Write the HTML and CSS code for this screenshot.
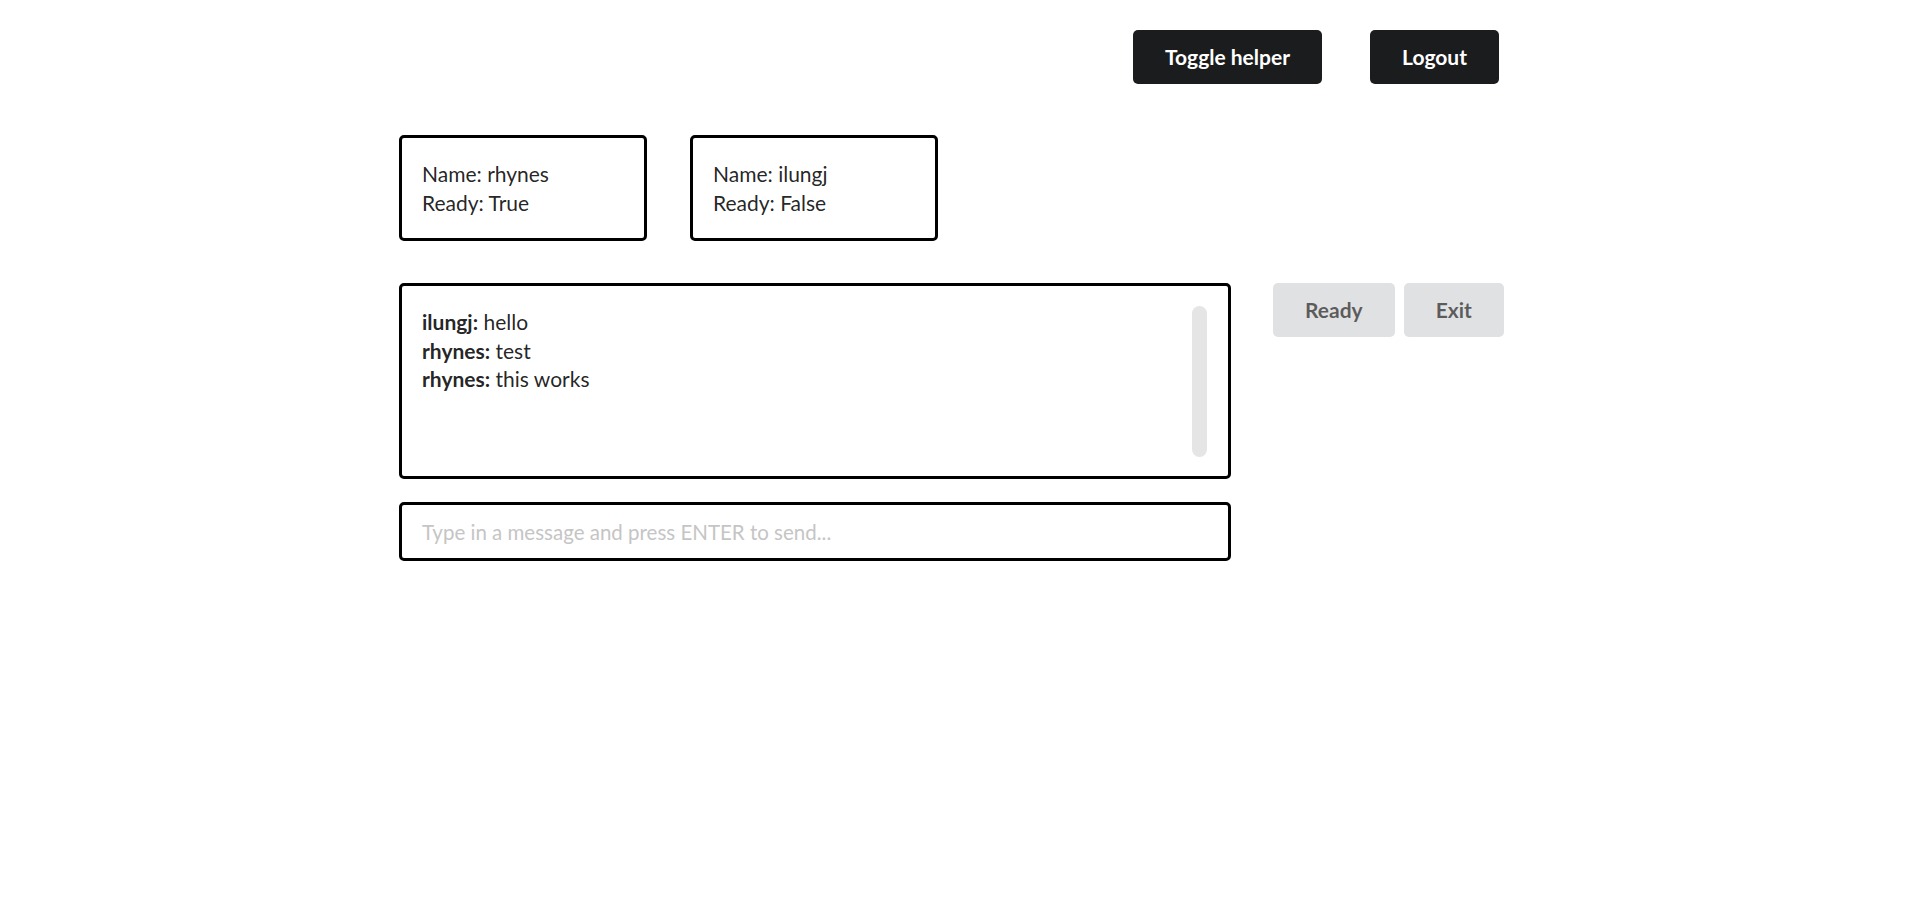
FILE: index.html
```html
<!DOCTYPE html>
<html lang="en">
<head>
<meta charset="utf-8">
<title>Lobby</title>
<link rel="stylesheet" href="styles.css">
</head>
<body>
<div class="page">
  <header class="topbar">
    <button class="btn btn-dark">Toggle helper</button>
    <button class="btn btn-dark">Logout</button>
  </header>

  <section class="players">
    <div class="player-card">
      <div>Name: rhynes</div>
      <div>Ready: True</div>
    </div>
    <div class="player-card">
      <div>Name: ilungj</div>
      <div>Ready: False</div>
    </div>
  </section>

  <section class="main">
    <div class="chat-col">
      <div class="chat-box">
        <div class="chat-log">
          <div class="msg"><b>ilungj:</b> hello</div>
          <div class="msg"><b>rhynes:</b> test</div>
          <div class="msg"><b>rhynes:</b> this works</div>
        </div>
        <div class="scrollbar"></div>
      </div>
      <input class="chat-input" type="text" placeholder="Type in a message and press ENTER to send...">
    </div>
    <div class="actions">
      <button class="btn btn-grey btn-ready">Ready</button>
      <button class="btn btn-grey btn-exit">Exit</button>
    </div>
  </section>
</div>
</body>
</html>
```

FILE: styles.css
```css
* {
  box-sizing: border-box;
}

html, body {
  margin: 0;
  padding: 0;
  background: #ffffff;
}

body {
  font-family: "Lato", "Noto Sans", sans-serif;
  font-size: 21px;
  line-height: 28.7px;
  color: rgba(0, 0, 0, 0.87);
}

.page {
  width: 1105px;
  margin-left: 399px;
}

.btn {
  font-family: "Lato", "Noto Sans", sans-serif;
  font-weight: 700;
  font-size: 21px;
  line-height: 20px;
  height: 54px;
  padding: 0 32px;
  border: none;
  border-radius: 5px;
  cursor: pointer;
}

.btn-dark {
  background: #1b1c1d;
  color: #ffffff;
}

.btn-grey {
  background: #e0e1e2;
  color: rgba(0, 0, 0, 0.6);
}

.topbar {
  display: flex;
  justify-content: flex-end;
  gap: 48px;
  padding-top: 30px;
  padding-right: 5px;
}

.players {
  display: flex;
  gap: 43px;
  margin-top: 51px;
}

.player-card {
  width: 248px;
  height: 106px;
  border: 3px solid #000;
  border-radius: 5px;
  padding: 22px 20px 0;
}

.main {
  display: flex;
  gap: 42px;
  margin-top: 42px;
  align-items: flex-start;
}

.chat-col {
  width: 832px;
  display: flex;
  flex-direction: column;
  gap: 23px;
}

.chat-box {
  height: 196px;
  border: 3px solid #000;
  border-radius: 5px;
  padding: 20px 21px 19px 20px;
  display: flex;
}

.chat-log {
  flex: 1;
  overflow: hidden;
  padding-top: 2px;
}

.chat-log b {
  font-weight: 700;
}

.scrollbar {
  width: 15px;
  flex-shrink: 0;
  background: #e5e5e5;
  border-radius: 8px;
}

.chat-input {
  width: 100%;
  height: 59px;
  border: 3px solid #000;
  border-radius: 5px;
  padding: 0 20px;
  font-family: "Lato", "Noto Sans", sans-serif;
  font-size: 20.5px;
  color: rgba(0, 0, 0, 0.87);
  outline: none;
}

.chat-input::placeholder {
  color: #c5c5c5;
}

.actions {
  display: flex;
  gap: 9px;
}
```
